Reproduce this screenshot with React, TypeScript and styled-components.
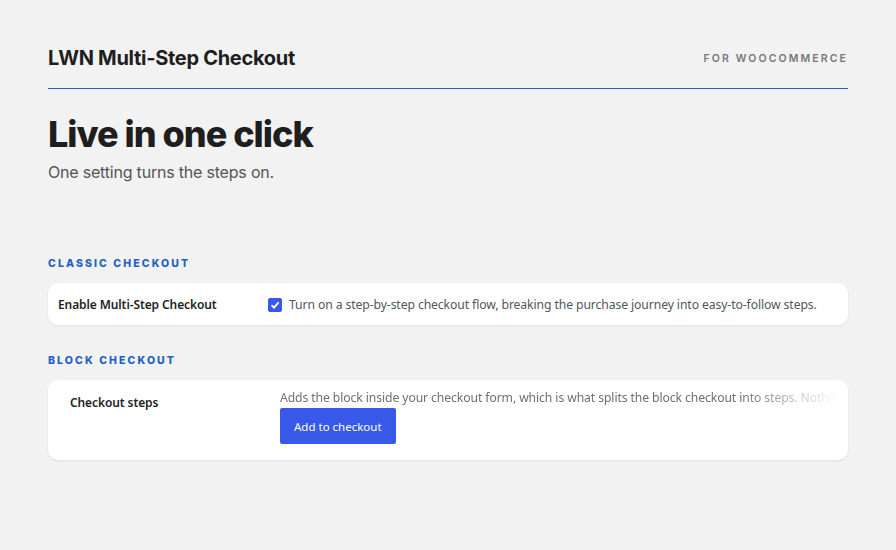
import React, { useState } from 'react';
import styled, { createGlobalStyle } from 'styled-components';

const GlobalStyle = createGlobalStyle`
  html, body {
    margin: 0;
    padding: 0;
    background: #f2f2f2;
  }
  body {
    font-family: "Noto Sans", "Liberation Sans", sans-serif;
    color: #1e1e1e;
  }
`;

const Page = styled.div`
  width: 800px;
  padding: 46px 48px 40px;
`;

const Header = styled.header`
  display: flex;
  justify-content: space-between;
  align-items: center;
  padding-bottom: 18px;
  border-bottom: 1.5px solid #2262c6;
`;

const Brand = styled.h2`
  margin: 0;
  font-family: Inter, "Liberation Sans", sans-serif;
  font-size: 20px;
  font-weight: 700;
  letter-spacing: -0.3px;
  color: #1e1e1e;
`;

const Tagline = styled.span`
  font-family: Inter, "Liberation Sans", sans-serif;
  font-size: 10.5px;
  font-weight: 600;
  letter-spacing: 2.1px;
  color: #777;
`;

const Hero = styled.section`
  padding-top: 24px;
`;

const Title = styled.h1`
  margin: 0;
  font-family: Inter, "Liberation Sans", sans-serif;
  font-size: 36px;
  font-weight: 800;
  letter-spacing: -1px;
  line-height: 1.2;
  color: #1e1e1e;
`;

const Lead = styled.p`
  margin: 6px 0 0;
  font-family: Inter, "Liberation Sans", sans-serif;
  font-size: 16px;
  font-weight: 400;
  letter-spacing: -0.2px;
  color: #555;
`;

const Section = styled.section<{ $top: number }>`
  margin-top: ${({ $top }) => $top}px;
`;

const SectionLabel = styled.h3`
  margin: 0 0 13px;
  font-family: Inter, "Liberation Sans", sans-serif;
  font-size: 10.5px;
  font-weight: 800;
  letter-spacing: 2.1px;
  color: #1f5fc4;
  text-transform: uppercase;
`;

const Card = styled.div<{ $pad: string }>`
  display: flex;
  align-items: flex-start;
  background: #fff;
  border-radius: 10px;
  box-shadow: 0 1px 3px rgba(0, 0, 0, 0.07);
  padding: ${({ $pad }) => $pad};
`;

const FieldLabel = styled.div<{ $width: number; $top: number }>`
  flex: 0 0 ${({ $width }) => $width}px;
  padding-top: ${({ $top }) => $top}px;
  font-size: 12px;
  font-weight: 600;
  letter-spacing: -0.1px;
  color: #1e1e1e;
`;

const FieldBody = styled.div`
  flex: 1;
  min-width: 0;
  display: flex;
  flex-direction: column;
  align-items: flex-start;
  gap: 2px;
`;

const CheckRow = styled.label`
  display: flex;
  align-items: center;
  gap: 7px;
  font-size: 12.2px;
  letter-spacing: -0.1px;
  white-space: nowrap;
  color: #50575e;
  cursor: pointer;
`;

const Box = styled.span<{ $on: boolean }>`
  width: 14px;
  height: 14px;
  border-radius: 2px;
  background: ${({ $on }) => ($on ? '#3858e9' : '#fff')};
  border: 1px solid ${({ $on }) => ($on ? '#3858e9' : '#8c8f94')};
  display: flex;
  align-items: center;
  justify-content: center;
  box-sizing: border-box;
`;

const FadeText = styled.div`
  width: 100%;
  white-space: nowrap;
  overflow: hidden;
  font-size: 12.2px;
  letter-spacing: -0.1px;
  color: #6b7075;
  -webkit-mask-image: linear-gradient(to right, #000 82%, transparent 100%);
  mask-image: linear-gradient(to right, #000 82%, transparent 100%);
`;

const Button = styled.button`
  height: 36px;
  padding: 0 14px;
  border: 0;
  border-radius: 2px;
  background: #3858e9;
  color: #fff;
  font-family: "Noto Sans", "Liberation Sans", sans-serif;
  font-size: 11.5px;
  cursor: pointer;
`;

export default function App() {
  const [enabled, setEnabled] = useState(true);

  return (
    <>
      <GlobalStyle />
      <Page>
        <Header>
          <Brand>LWN Multi-Step Checkout</Brand>
          <Tagline>FOR WOOCOMMERCE</Tagline>
        </Header>

        <Hero>
          <Title>Live in one click</Title>
          <Lead>One setting turns the steps on.</Lead>
        </Hero>

        <Section $top={75}>
          <SectionLabel>Classic checkout</SectionLabel>
          <Card $pad="13px 10px 12px">
            <FieldLabel $width={210} $top={0}>Enable Multi-Step Checkout</FieldLabel>
            <FieldBody>
              <CheckRow onClick={() => setEnabled(!enabled)}>
                <Box $on={enabled}>
                  {enabled && (
                    <svg width="10" height="10" viewBox="0 0 10 10">
                      <path d="M1.5 5.2 L4 7.6 L8.6 2.4" fill="none" stroke="#fff" strokeWidth="1.8" />
                    </svg>
                  )}
                </Box>
                Turn on a step-by-step checkout flow, breaking the purchase journey into easy-to-follow steps.
              </CheckRow>
            </FieldBody>
          </Card>
        </Section>

        <Section $top={29}>
          <SectionLabel>Block checkout</SectionLabel>
          <Card $pad="9px 10px 16px 22px">
            <FieldLabel $width={210} $top={5}>Checkout steps</FieldLabel>
            <FieldBody>
              <FadeText>
                Adds the block inside your checkout form, which is what splits the block checkout into steps. Nothing changes until you add it.
              </FadeText>
              <Button>Add to checkout</Button>
            </FieldBody>
          </Card>
        </Section>
      </Page>
    </>
  );
}
